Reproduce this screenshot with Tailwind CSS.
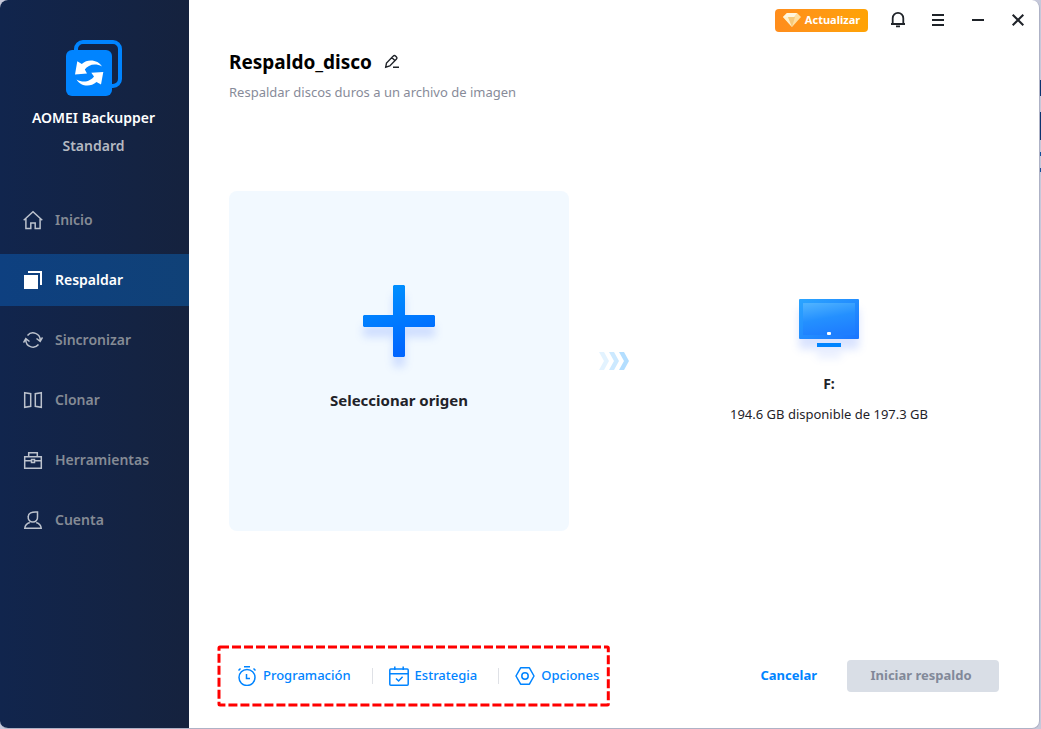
<!DOCTYPE html>
<html lang="es">
<head>
    <meta charset="UTF-8">
    <meta name="viewport" content="width=device-width, initial-scale=1.0">
    <title>AOMEI Backupper Standard</title>
    <script src="https://cdn.jsdelivr.net/npm/@tailwindcss/browser@4"></script>
</head>
<body class="relative min-h-screen bg-[#c6c8da] pr-px font-['Noto_Sans','Open_Sans',sans-serif] text-[#1f2329]">
    <!-- Escritorio detrás de la ventana -->
    <div class="absolute top-0 right-0 w-2">
        <div class="mt-20 h-4 bg-[#0b3470]"></div>
        <div class="mt-4 h-7 bg-[#0b3470]"></div>
        <div class="mt-3 h-1 bg-[#12509a]"></div>
        <div class="mt-3 h-1 bg-[#12509a]"></div>
    </div>

    <div class="relative flex min-h-screen overflow-hidden rounded-lg border-r border-b border-[#aeb2c6] bg-white">
        <!-- Barra lateral -->
        <aside class="w-[189px] shrink-0 bg-linear-to-r from-[#11254d] to-[#15223e]">
            <div class="flex h-[194px] flex-col items-center pt-10 pr-0.5">
                <svg class="h-14 w-14" viewBox="0 0 56 56" fill="none">
                    <path d="M10 14V9a7 7 0 0 1 7-7h30a7 7 0 0 1 7 7v30a7 7 0 0 1-7 7h-3" stroke="#0084ff" stroke-width="4"/>
                    <rect x="0" y="10" width="46" height="46" rx="6" fill="#0084ff"/>
                    <path d="M36 26.500C32.500 20 22 18 15.800 24L11.300 21.300 9 34.500 21 33.500 18.800 29.500C22 25 29 22.500 36 26.500Z" fill="#fff"/>
                    <path d="M10.500 39.500C14 46 24 48 30.500 42L35 44.500 37.300 32 25.300 32.800 28 36.500C25 41 17.500 43.500 10.500 39.500Z" fill="#fff"/>
                </svg>
                <h2 class="mt-3 text-sm leading-5 font-semibold text-white">AOMEI Backupper</h2>
                <p class="mt-2 text-sm leading-5 font-semibold text-[#b4b9c1]">Standard</p>
            </div>
            <nav class="flex flex-col gap-2 text-sm font-semibold text-[#858b95]">
                <a href="#" class="flex h-[52px] items-center gap-3 pl-[23px]">
                    <svg class="h-5 w-5" viewBox="0 0 20 20" fill="none" stroke="#bcc2cd" stroke-width="1.500">
                        <path d="M.7 10.200 10 1.700l9.300 8.500M2.900 8.500v10h4.900v-5.500h4.400v5.500h4.900v-10"/>
                    </svg>
                    Inicio
                </a>
                <a href="#" class="flex h-[52px] items-center gap-3 bg-linear-to-r from-[#0e4080] to-[#104177] pl-[23px] text-white">
                    <svg class="h-5 w-5" viewBox="0 0 20 20" fill="#fff">
                        <path d="M1 5h14v14H1zM5 1h14v14h-2V3H5z"/>
                    </svg>
                    Respaldar
                </a>
                <a href="#" class="flex h-[52px] items-center gap-3 pl-[23px]">
                    <svg class="h-5 w-5" viewBox="0 0 20 20" fill="none" stroke="#bcc2cd" stroke-width="1.500">
                        <path d="M4.500 5.500a7.200 7.200 0 0 1 12.700 4.800M15.500 14.500A7.200 7.200 0 0 1 2.800 9.700M13.500 8.500l3.700 2.900 2.300-4M.5 12.600l2.300-4 3.700 2.900"/>
                    </svg>
                    Sincronizar
                </a>
                <a href="#" class="flex h-[52px] items-center gap-3 pl-[23px]">
                    <svg class="h-5 w-5" viewBox="0 0 20 20" fill="none" stroke="#bcc2cd" stroke-width="1.500">
                        <path d="M1.700 2.700l6 1v12.600l-6 1zM18.300 2.700l-6 1v12.600l6 1z"/>
                    </svg>
                    Clonar
                </a>
                <a href="#" class="flex h-[52px] items-center gap-3 pl-[23px]">
                    <svg class="h-5 w-5" viewBox="0 0 20 20" fill="none" stroke="#bcc2cd" stroke-width="1.500">
                        <path d="M1.700 6.700h16.600v11.600H1.700zM5.700 6.500V2.700h8.600v3.800M1.700 10.700h6.600M11.700 10.700h6.600M8.500 9.500h3v3h-3z"/>
                    </svg>
                    Herramientas
                </a>
                <a href="#" class="flex h-[52px] items-center gap-3 pl-[23px]">
                    <svg class="h-5 w-5" viewBox="0 0 20 20" fill="none" stroke="#bcc2cd" stroke-width="1.500">
                        <path d="M14.500 2v4.700a4.700 4.700 0 1 1-9.300 0C5.200 3.200 8.500 1.500 14.500 2zM6.800 12.500C3.500 13.500 2 15.500 1.800 18.300h16.400c-.2-2.800-1.700-4.800-5-5.800"/>
                    </svg>
                    Cuenta
                </a>
            </nav>
        </aside>

        <main class="flex flex-1 flex-col px-10 pb-[23px]">
            <!-- Controles de la ventana -->
            <div class="-mr-[29px] flex h-10 items-center justify-end gap-5">
                <button class="flex h-[23px] w-[93px] items-center justify-center gap-1 rounded bg-linear-to-r from-[#ff8d1c] to-[#ffa304] text-[11px] font-bold text-white">
                    <svg class="h-4 w-[18px]" viewBox="0 0 18 16">
                        <path d="M4 1h10l4 4-9 10L0 5z" fill="#ffdfa0"/>
                        <path d="M4 1h10l-3 4H0z" fill="#fff6df"/>
                        <path d="M0 5h5l4 10z" fill="#fff0cc"/>
                        <path d="M5 5h7L9 15z" fill="#f7c979"/>
                    </svg>
                    Actualizar
                </button>
                <button aria-label="Notificaciones" class="flex h-5 w-5 items-center justify-center">
                    <svg class="h-5 w-5" viewBox="0 0 20 20" fill="none" stroke="#1f2329" stroke-width="1.800">
                        <path d="M4.700 14V8.200a5.300 5.300 0 0 1 10.600 0V14M3 14h14M8 16.300h4"/>
                    </svg>
                </button>
                <button aria-label="Menú" class="flex h-5 w-5 items-center justify-center">
                    <svg class="h-5 w-5" viewBox="0 0 20 20" stroke="#1f2329" stroke-width="2">
                        <path d="M4 5h12M4 10h12M4 15h12"/>
                    </svg>
                </button>
                <button aria-label="Minimizar" class="flex h-5 w-5 items-center justify-center">
                    <svg class="h-5 w-5" viewBox="0 0 20 20" stroke="#1f2329" stroke-width="2">
                        <path d="M4 10h12"/>
                    </svg>
                </button>
                <button aria-label="Cerrar" class="flex h-5 w-5 items-center justify-center">
                    <svg class="h-5 w-5" viewBox="0 0 20 20" stroke="#1f2329" stroke-width="2">
                        <path d="M4.700 4.700l10.600 10.600M15.300 4.700 4.700 15.300"/>
                    </svg>
                </button>
            </div>

            <!-- Título -->
            <header class="pt-2">
                <div class="flex items-center gap-3">
                    <h1 class="text-[19px] leading-7 font-bold text-black">Respaldo_disco</h1>
                    <button aria-label="Editar nombre">
                        <svg class="h-4 w-4" viewBox="0 0 16 16" fill="none" stroke="#1f2329" stroke-width="1.400">
                            <path d="M1.700 13.200l.8-4.200L9.300 2a1.500 1.500 0 0 1 2.200 0l1 1a1.500 1.500 0 0 1 0 2.100L5.800 12zM7.800 3.500l3.200 3.200M9 13.300h6"/>
                        </svg>
                    </button>
                </div>
                <p class="mt-1 text-[13px] leading-6 text-[#878b99]">Respaldar discos duros a un archivo de imagen</p>
            </header>

            <!-- Origen y destino -->
            <section class="mt-[87px] flex items-center">
                <button class="flex h-[340px] w-[340px] flex-col items-center rounded-lg bg-[#f2f9ff] pt-[94px]">
                    <svg class="h-[72px] w-[72px] overflow-visible drop-shadow-[0_10px_4px_#0040ff26]" viewBox="0 0 72 72">
                        <defs>
                            <linearGradient id="plus" x1="0" y1="0" x2=".3" y2="1">
                                <stop offset="0" stop-color="#0095ff"/>
                                <stop offset="1" stop-color="#0066ff"/>
                            </linearGradient>
                        </defs>
                        <path d="M31 0h10l1 1v29h29l1 1v10l-1 1H42v29l-1 1H31l-1-1V42H1l-1-1V31l1-1h29V1z" fill="url(#plus)"/>
                    </svg>
                    <span class="mt-[31px] text-[15px] leading-6 font-bold">Seleccionar origen</span>
                </button>
                <div class="flex flex-1 justify-center">
                    <svg class="h-[18px] w-[30px]" viewBox="0 0 30 18">
                        <path d="M0 0h5l5 9-5 9H0l5-9z" fill="#e3f3ff"/>
                        <path d="M10 0h5l5 9-5 9h-5l5-9z" fill="#cce9ff"/>
                        <path d="M20 0h5l5 9-5 9h-5l5-9z" fill="#b3deff"/>
                    </svg>
                </div>
                <button class="flex h-[340px] w-[340px] flex-col items-center pt-[108px]">
                    <svg class="h-12 w-[60px] overflow-visible drop-shadow-[0_10px_4px_#0040ff26]" viewBox="0 0 60 48">
                        <defs>
                            <linearGradient id="frame" x1="0" y1="0" x2="1" y2="1">
                                <stop offset="0" stop-color="#2ba5ff"/>
                                <stop offset="1" stop-color="#1a75ff"/>
                            </linearGradient>
                            <linearGradient id="glass" x1=".2" y1="0" x2=".5" y2="1">
                                <stop offset="0" stop-color="#4db1ff"/>
                                <stop offset=".5" stop-color="#2490ff"/>
                                <stop offset="1" stop-color="#1e7eff"/>
                            </linearGradient>
                        </defs>
                        <rect width="60" height="40" rx="1" fill="url(#frame)"/>
                        <rect x="4" y="4" width="52" height="32" fill="url(#glass)"/>
                        <rect x="28" y="33" width="4" height="3" rx="1" fill="#fff"/>
                        <rect x="18" y="44" width="24" height="4" fill="#0084ff"/>
                    </svg>
                    <span class="mt-[25px] text-sm leading-6 font-bold">F:</span>
                    <span class="mt-[6px] text-[13px] leading-6">194.6 GB disponible de 197.3 GB</span>
                </button>
            </section>

            <!-- Acciones -->
            <footer class="mt-auto flex items-center justify-between pt-6">
                <div class="relative -ml-[10px] flex h-[58px] items-center pr-[9px] pl-[18px] text-[13px] font-medium text-[#0084ff]">
                    <svg class="pointer-events-none absolute inset-0 h-full w-full overflow-visible" fill="none" stroke="#f00" stroke-width="3" stroke-dasharray="9 3">
                        <rect width="100%" height="100%" rx="1"/>
                    </svg>
                    <button class="flex items-center gap-[6px]">
                        <svg class="h-5 w-5" viewBox="0 0 20 20" fill="none" stroke="#0084ff" stroke-width="1.500">
                            <circle cx="10" cy="11.500" r="8"/>
                            <path d="M7 .8h6M1.500 4.500l2-2M18.500 4.500l-2-2M9.500 8v4.500H13"/>
                        </svg>
                        Programación
                    </button>
                    <span class="mr-4 ml-[21px] h-4 w-px bg-[#dfe1e6]"></span>
                    <button class="flex items-center gap-[6px]">
                        <svg class="h-5 w-5" viewBox="0 0 20 20" fill="none" stroke="#0084ff" stroke-width="1.500">
                            <rect x=".8" y="3" width="18.400" height="16.200" rx="1"/>
                            <path d="M.8 7.800h18.400M5.800.5V4M14.200.5V4M7 12.500l2.600 2.500 4-4.300"/>
                        </svg>
                        Estrategia
                    </button>
                    <span class="mr-4 ml-[21px] h-4 w-px bg-[#dfe1e6]"></span>
                    <button class="flex items-center gap-[6px]">
                        <svg class="h-5 w-5" viewBox="0 0 20 20" fill="none" stroke="#0084ff" stroke-width="1.500">
                            <path d="M5.600 1.800h8.800L19 10l-4.600 8.200H5.600L1 10z" stroke-linejoin="round"/>
                            <circle cx="10" cy="10" r="3.200"/>
                        </svg>
                        Opciones
                    </button>
                </div>
                <div class="flex items-center gap-[30px] text-[13px] font-bold">
                    <button class="text-[#0084ff]">Cancelar</button>
                    <button disabled class="h-8 w-[152px] rounded bg-[#d9dee6] pr-1 text-[#828999]">Iniciar respaldo</button>
                </div>
            </footer>
        </main>
    </div>
</body>
</html>
